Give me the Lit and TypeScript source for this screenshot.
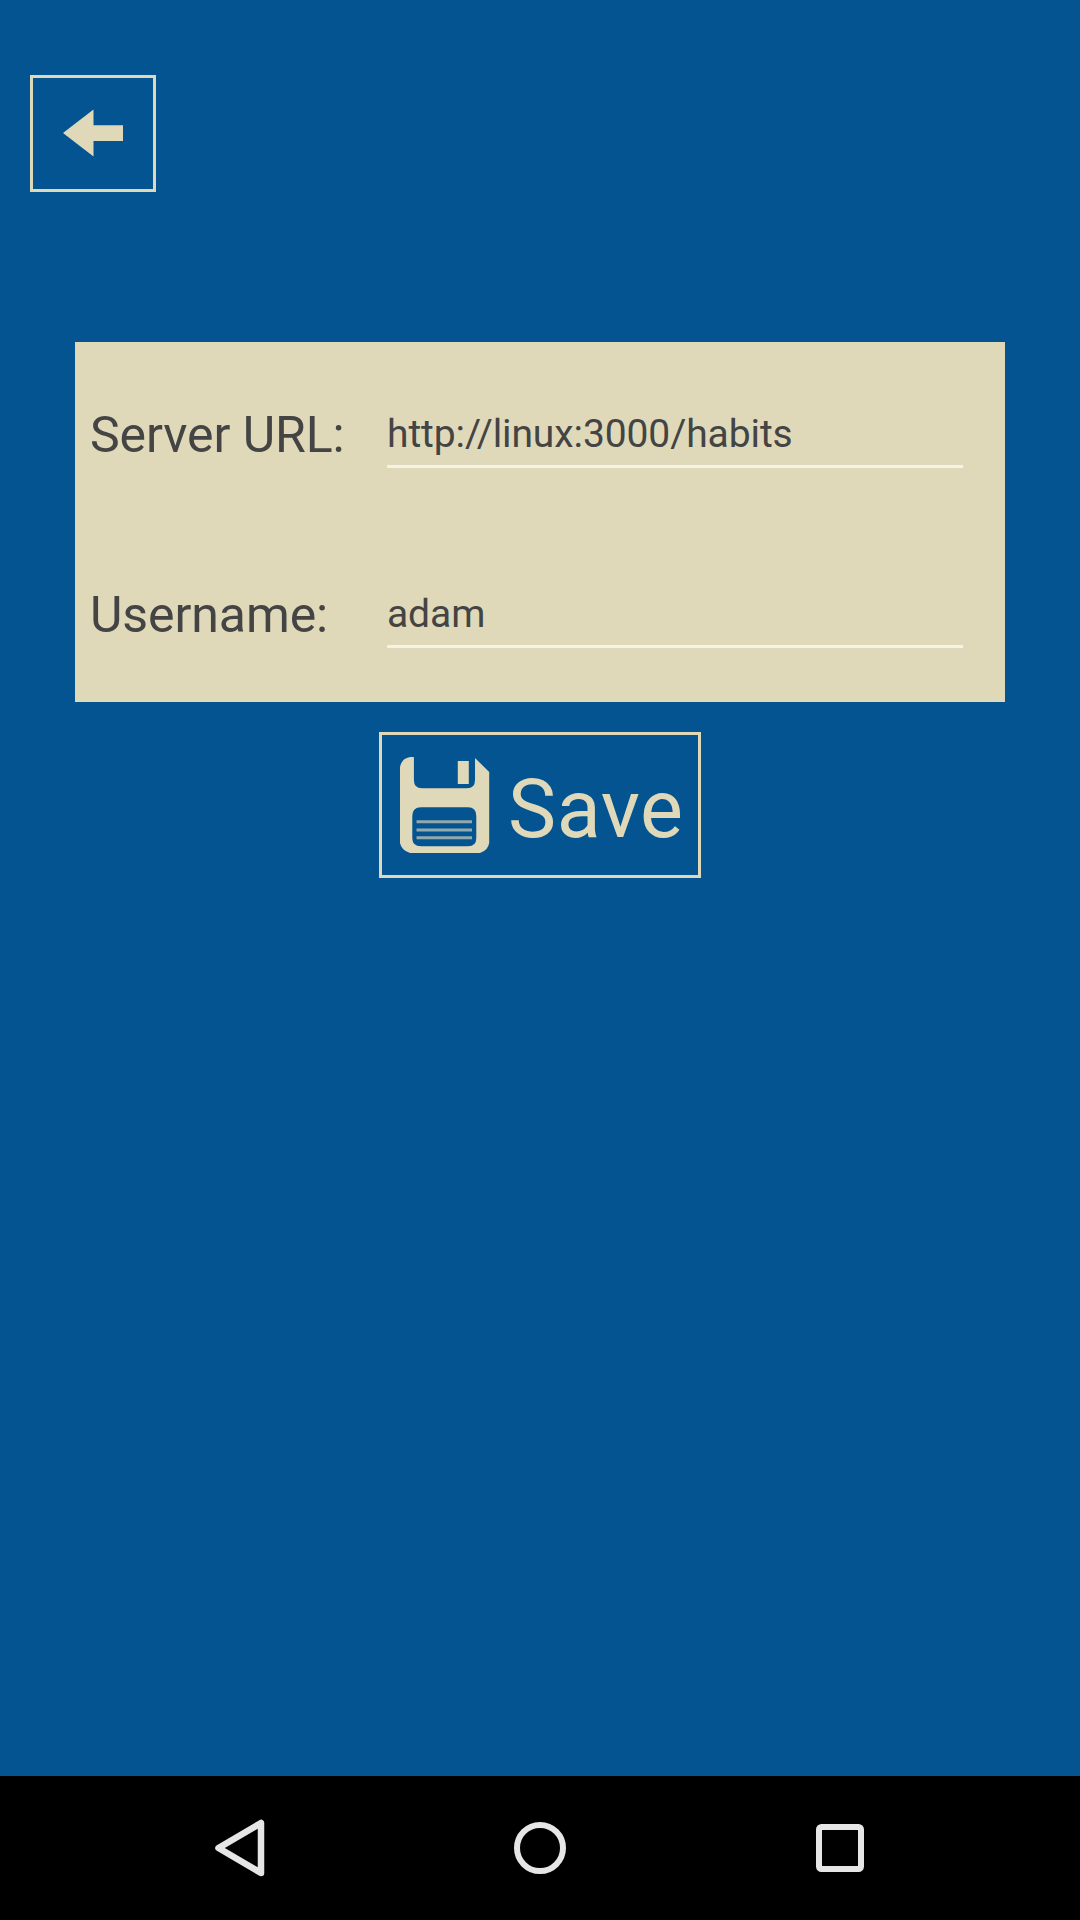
import { LitElement, html, css, svg } from "lit";
import { customElement, property } from "lit/decorators.js";

@customElement("settings-field")
class SettingsField extends LitElement {
  @property() label = "";
  @property() value = "";

  static styles = css`
    :host {
      display: block;
      height: 180px;
    }
    .row {
      display: grid;
      grid-template-columns: 297px 576px;
      height: 100%;
      box-sizing: border-box;
      padding-left: 15px;
      color: #444;
      white-space: nowrap;
    }
    .label {
      padding-top: 63px;
      font-size: 50px;
      line-height: 60px;
      letter-spacing: -0.1px;
    }
    .value {
      box-sizing: border-box;
      height: 126px;
      padding-top: 68px;
      border-bottom: 3px solid #f5f2e8;
      font-size: 39px;
      line-height: 48px;
      letter-spacing: -0.09px;
    }
  `;

  render() {
    return html`<div class="row">
      <div class="label">${this.label}</div>
      <div class="value">${this.value}</div>
    </div>`;
  }
}

const arrowIcon = svg`<path d="M0 24 L30.5 0.500 V16.200 H60 V32 H30.5 V47.500 Z" fill="#dfd9b9"/>`;

const floppyIcon = svg`
  <path fill="#dfd9b9" fill-rule="evenodd" d="M10 0 H13.900 V23 Q13.900 31.3 22 31.3 H67 Q75 31.3 75 23 V1 L89.2 15 V86 Q88 93.500 80 96 H10 Q1.500 93.500 0 86 V10 Q1.500 1.500 10 0 Z
    M21 50.300 Q12.300 50.300 12.300 59 V81 Q12.300 89.200 21 89.200 H68 Q76.300 89.200 76.300 81 V59 Q76.300 50.300 68 50.300 Z"/>
  <rect x="57.800" y="4" width="11" height="23" fill="#dfd9b9"/>
  <path d="M16.500 64.800 H72 M16.500 73 H72 M16.500 80.700 H72" stroke="#93a9ab" stroke-width="3"/>`;

@customElement("app-root")
class AppRoot extends LitElement {
  static styles = css`
    :host {
      display: flex;
      flex-direction: column;
      width: 1080px;
      height: 1920px;
      background: #035491;
      font-family: Roboto, sans-serif;
    }
    .content {
      flex: 1;
      display: flex;
      flex-direction: column;
      align-items: center;
      padding: 75px 75px 0;
    }
    .back {
      align-self: flex-start;
      display: flex;
      box-sizing: border-box;
      width: 126px;
      height: 117px;
      margin-left: -45px;
      padding: 31px 0 0 30px;
      border: 3px solid #dfd9b9;
    }
    .card {
      align-self: stretch;
      margin-top: 150px;
      background: #dfd9b9;
    }
    .save {
      display: flex;
      box-sizing: border-box;
      width: 322px;
      height: 146px;
      margin-top: 30px;
      padding: 22px 0 0 18px;
      gap: 18px;
      border: 3px solid #dfd9b9;
      color: #dfd9b9;
      font-size: 81px;
      line-height: 95px;
      letter-spacing: 0.6px;
    }
    .caption {
      padding-top: 5px;
    }
    svg {
      display: block;
      flex: none;
    }
    .nav {
      display: flex;
      justify-content: center;
      align-items: center;
      gap: 204px;
      height: 144px;
      background: #000;
    }
  `;

  render() {
    return html`
      <div class="content">
        <div class="back" role="button" aria-label="Back">
          <svg width="60" height="48" viewBox="0 0 60 48">${arrowIcon}</svg>
        </div>
        <div class="card">
          <settings-field label="Server URL:" value="http://linux:3000/habits"></settings-field>
          <settings-field label="Username:" value="adam"></settings-field>
        </div>
        <div class="save" role="button">
          <svg width="90" height="96" viewBox="0 0 90 96">${floppyIcon}</svg>
          <span class="caption">Save</span>
        </div>
      </div>
      <div class="nav">
        <svg width="96" height="96" viewBox="0 0 96 96" fill="none" stroke="#e6e6e6" stroke-width="6" stroke-linejoin="round">
          <path d="M26.500 48 L69 23 V73 Z" stroke-width="6.500"/>
        </svg>
        <svg width="96" height="96" viewBox="0 0 96 96" fill="none" stroke="#e6e6e6" stroke-width="6">
          <circle cx="48" cy="48" r="23"/>
        </svg>
        <svg width="96" height="96" viewBox="0 0 96 96" fill="none" stroke="#e6e6e6" stroke-width="6">
          <rect x="27" y="27" width="42" height="42" rx="2.500"/>
        </svg>
      </div>
    `;
  }
}
